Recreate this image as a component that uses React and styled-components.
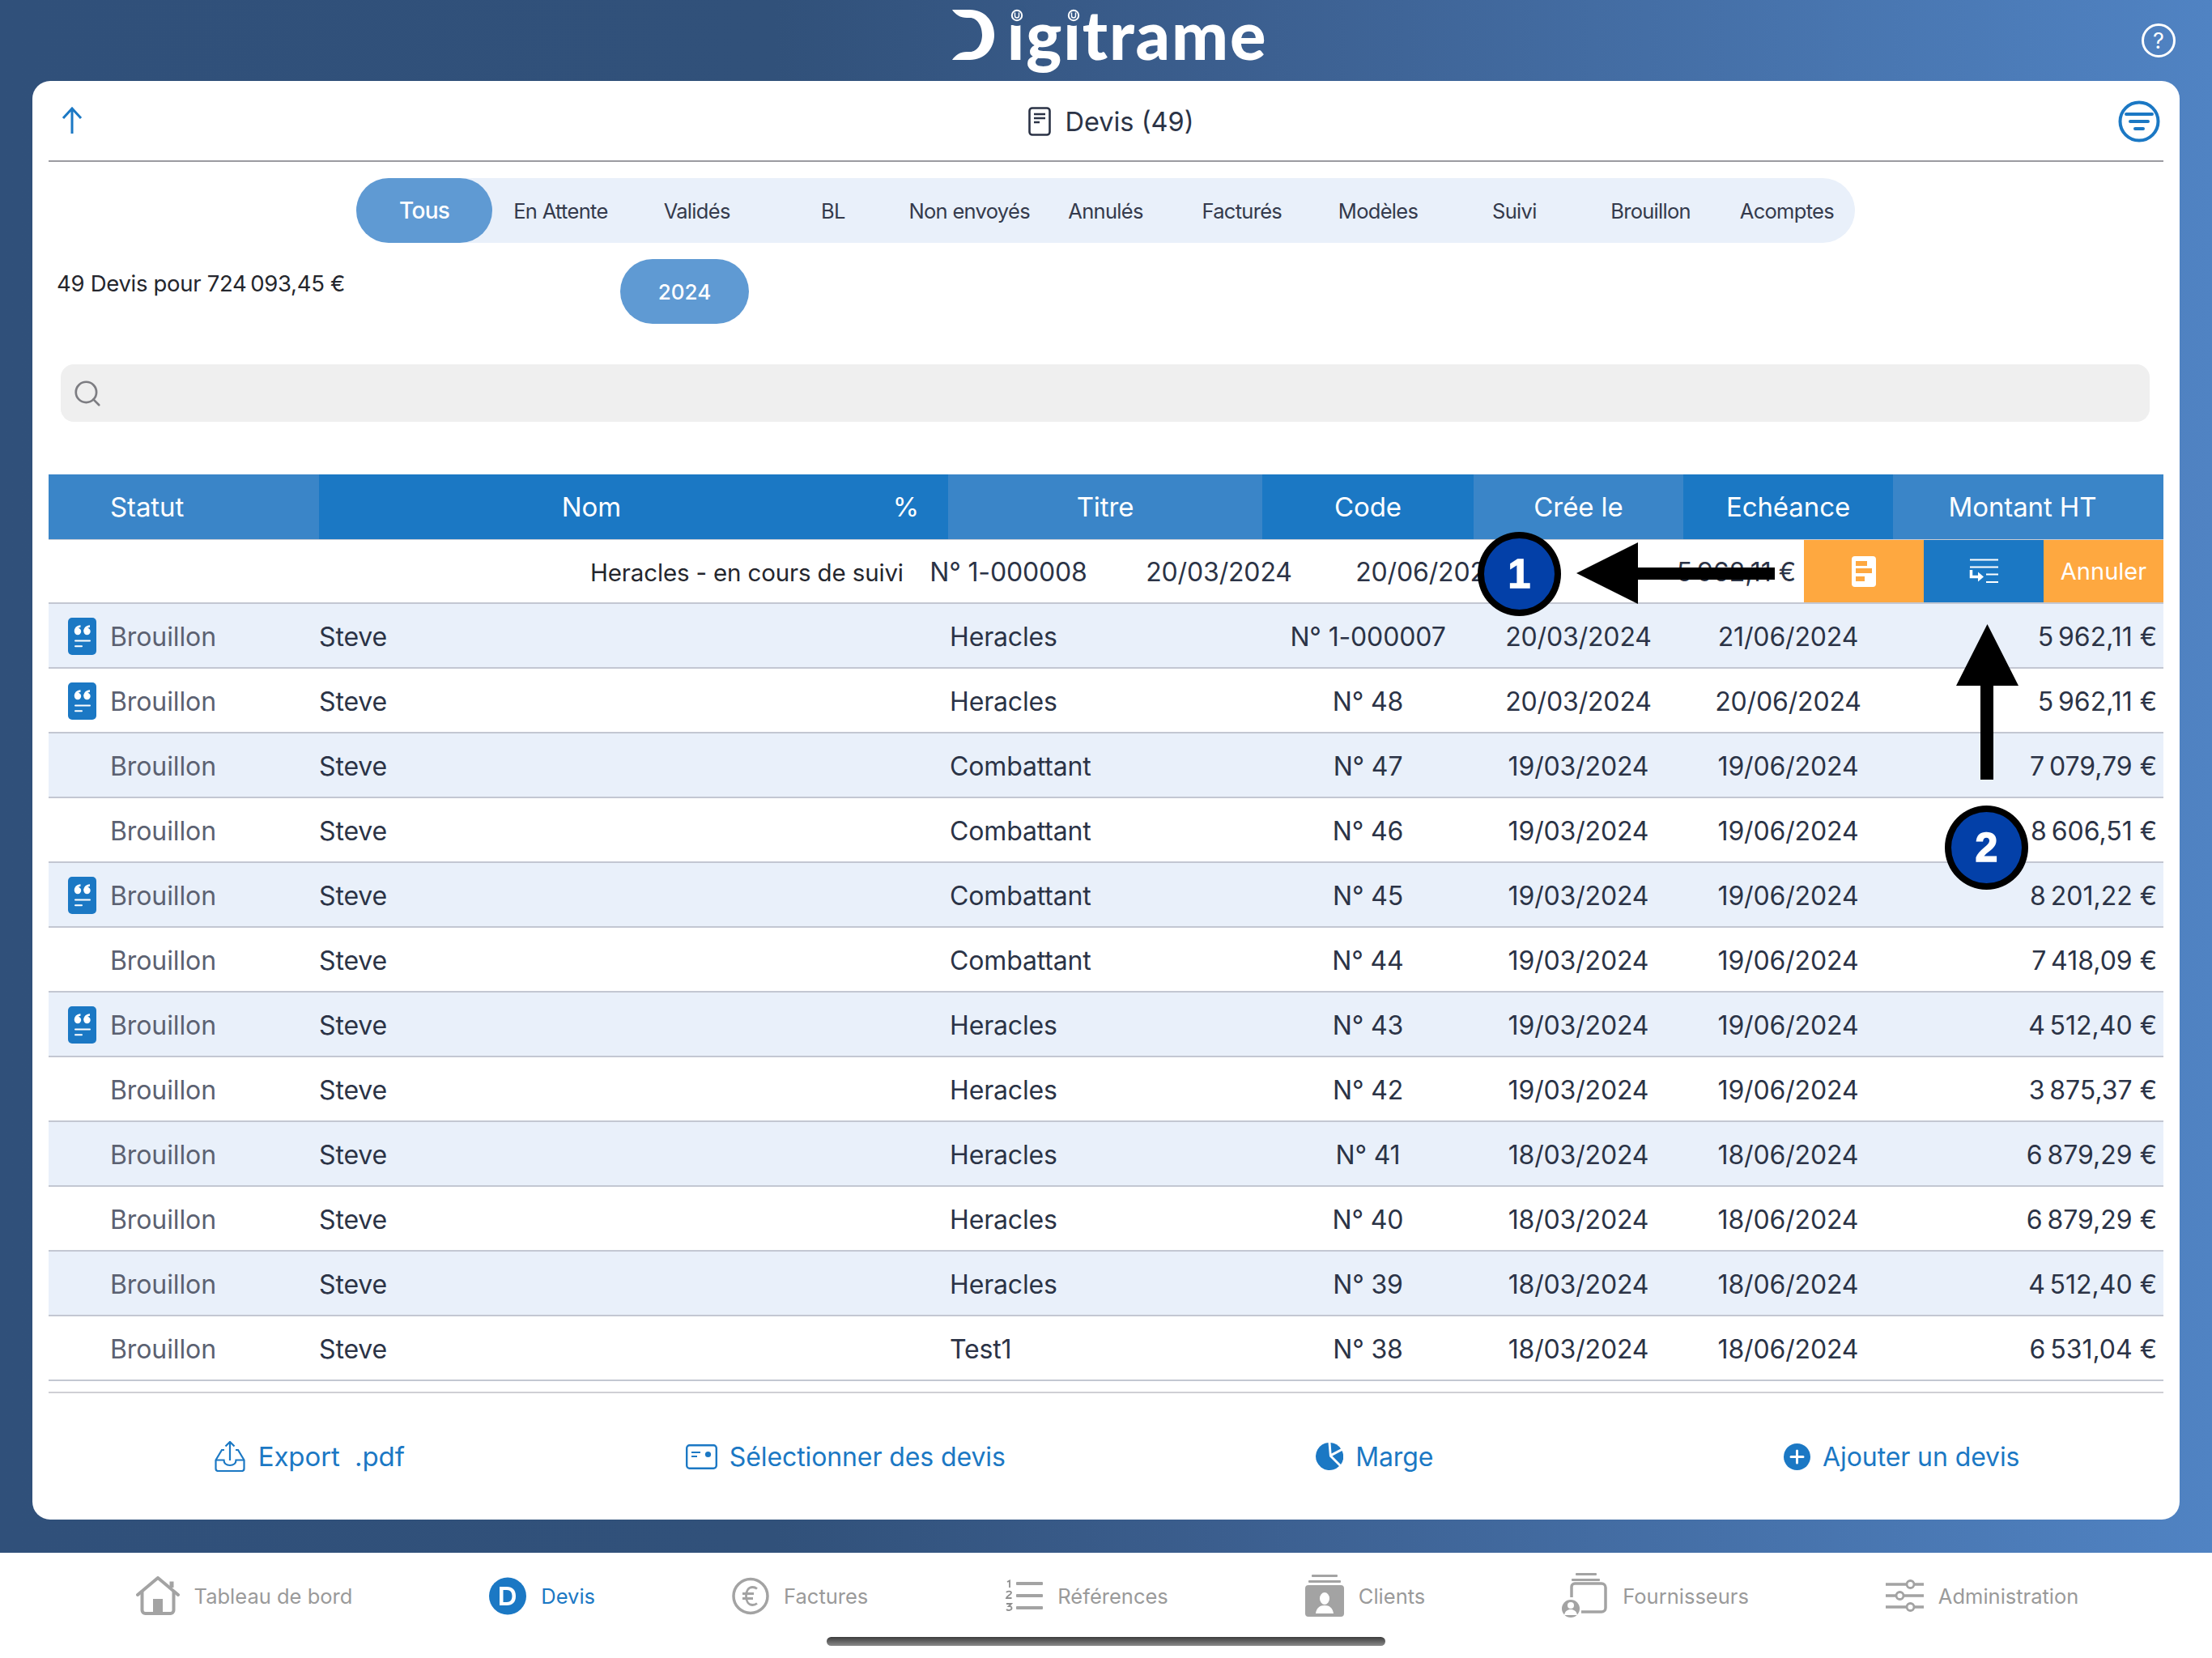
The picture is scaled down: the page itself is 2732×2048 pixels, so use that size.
import React from "react";
import styled, { createGlobalStyle } from "styled-components";
import { Search } from "lucide-react";

const BLUE = "#1b78c4";
const COLS = "334px 673px 104px 388px 261px 259px 259px 334px";
const NN = "\u202f";

const Global = createGlobalStyle`
  html, body { margin: 0; padding: 0; }
  body { font-family: "Inter", "Liberation Sans", sans-serif; color: #2b3346; }
  * { box-sizing: border-box; }
`;

const Page = styled.div`
  position: relative;
  width: 2732px;
  height: 2048px;
  overflow: hidden;
  display: flex;
  flex-direction: column;
  background: linear-gradient(to right, #30507a 0%, #31517a 35%, #3b5e8e 55%, #5083c3 100%);
`;
const TopBar = styled.header`
  height: 100px;
  flex: none;
  display: flex;
  align-items: flex-start;
  justify-content: center;
  position: relative;
`;
const Logo = styled.div`
  display: flex;
  align-items: flex-start;
  gap: 16px;
  margin-left: 9px;
`;
const LogoMark = styled.svg`
  margin-top: 12px;
`;
const LogoText = styled.span`
  position: relative;
  font-family: "Lato", sans-serif;
  font-weight: 900;
  font-size: 83px;
  line-height: 84px;
  color: #fff;
  letter-spacing: 1.9px;
`;
const LogoDot = styled.svg`
  position: absolute;
  top: 6px;
  left: ${(p) => p.$x}px;
`;
const HelpButton = styled.div`
  position: absolute;
  right: 45px;
  top: 29px;
  width: 42px;
  height: 42px;
  border-radius: 50%;
  border: 3px solid #fff;
  color: #fff;
  font-size: 27px;
  display: flex;
  align-items: center;
  justify-content: center;
`;
const Card = styled.main`
  flex: none;
  height: 1777px;
  margin: 0 40px;
  background: #fff;
  border-radius: 22px;
  display: flex;
  flex-direction: column;
`;
const TitleBar = styled.div`
  height: 100px;
  margin: 0 20px;
  padding-top: 2px;
  border-bottom: 2px solid #9b9ba1;
  display: grid;
  grid-template-columns: 120px 1fr 120px;
  align-items: center;
`;
const BackIcon = styled.svg`
  width: 30px;
  height: 34px;
  margin-left: 14px;
  margin-top: -2px;
`;
const Title = styled.div`
  display: flex;
  align-items: center;
  justify-content: center;
  gap: 17px;
  padding-left: 13px;
  font-size: 32.5px;
  color: #2b3346;
`;
const MenuIcon = styled.svg`
  width: 52px;
  height: 52px;
  justify-self: end;
  margin-right: 4px;
`;
const Segments = styled.nav`
  margin: 20px 0 0 400px;
  width: 1851px;
  height: 80px;
  flex: none;
  border-radius: 40px;
  background: #e9f0fa;
  display: grid;
  grid-template-columns: repeat(11, 1fr);
`;
const Segment = styled.div`
  display: flex;
  align-items: center;
  justify-content: center;
  border-radius: 40px;
  letter-spacing: -0.7px;
  font-weight: ${(p) => (p.$active ? 500 : 400)};
  color: ${(p) => (p.$active ? "#fff" : "#343a4c")};
  background: ${(p) => (p.$active ? "#5f9ad3" : "transparent")};
  font-size: ${(p) => (p.$active ? "28px" : "25.5px")};
`;
const SummaryRow = styled.div`
  display: flex;
  align-items: flex-start;
  height: 80px;
  margin-top: 20px;
  padding-left: 30px;
`;
const Summary = styled.div`
  width: 696px;
  padding-top: 12px;
  font-size: 27.5px;
  line-height: 36px;
  color: #24262d;
  letter-spacing: -0.3px;
`;
const YearPill = styled.div`
  width: 159px;
  height: 80px;
  border-radius: 40px;
  background: #5f9ad3;
  color: #fff;
  font-size: 26px;
  font-weight: 500;
  display: flex;
  align-items: center;
  justify-content: center;
`;
const SearchBar = styled.div`
  margin: 50px 37px 0 35px;
  height: 71px;
  flex: none;
  border-radius: 16px;
  background: #efefef;
  display: flex;
  align-items: center;
  padding-left: 14px;
  color: #7d7d82;
`;
const Table = styled.section`
  margin: 65px 20px 0;
  flex: none;
`;
const HeadRow = styled.div`
  display: grid;
  grid-template-columns: ${COLS};
  height: 81px;
  border-bottom: 1px solid #c9ccd4;
`;
const HeadCell = styled.div`
  display: flex;
  align-items: center;
  justify-content: ${(p) => (p.$start ? "flex-start" : "center")};
  padding-left: ${(p) => (p.$start ? "76px" : 0)};
  padding-right: ${(p) => p.$pr || 0}px;
  background: ${(p) => (p.$light ? "#3a85c8" : BLUE)};
  color: #fff;
  font-size: 33px;
  letter-spacing: -0.1px;
`;
const Row = styled.div`
  display: grid;
  grid-template-columns: ${COLS};
  height: 80px;
  padding-top: 2px;
  background: ${(p) => (p.$tint ? "#e9f0fa" : "#fff")};
  border-bottom: 2px solid #c3c7d2;
  align-items: center;
`;
const SwipeRow = styled.div`
  overflow: hidden;
  border-bottom: 2px solid #c3c7d2;
  height: 79px;
`;
const SwipeTrack = styled.div`
  display: flex;
  width: 3056px;
  margin-left: -444px;
  height: 100%;
`;
const SwipeCells = styled.div`
  display: grid;
  grid-template-columns: ${COLS};
  width: 2612px;
  padding-top: 2px;
  align-items: center;
  flex: none;
`;
const SwipeAction = styled.div`
  width: 148px;
  flex: none;
  display: flex;
  align-items: center;
  justify-content: center;
  background: ${(p) => (p.$orange ? "#fea840" : BLUE)};
  color: #fff;
  font-size: 29px;
`;
const StatusCell = styled.div`
  display: flex;
  align-items: center;
  padding-left: 24px;
  gap: 17px;
  color: #5b6171;
  font-size: 32px;
  letter-spacing: -0.1px;
`;
const IconSlot = styled.div`
  width: 35px;
  height: 46px;
  flex: none;
`;
const Cell = styled.div`
  font-size: ${(p) => p.$size || 32}px;
  letter-spacing: ${(p) => (p.$align === "right" ? "0.3px" : "-0.15px")};
  white-space: nowrap;
  color: ${(p) => (p.$black ? "#24262d" : "#2b3346")};
  text-align: ${(p) => p.$align || "left"};
  padding-right: ${(p) => p.$pr || 0}px;
  padding-left: ${(p) => p.$pl || 0}px;
`;
const Wide = styled(Cell)`
  grid-column: span 2;
`;
const FooterRule = styled.div`
  margin: 13px 20px 0;
  height: 2px;
  flex: none;
  background: #cfcfd4;
`;
const Actions = styled.div`
  flex: 1;
  margin: 0 20px;
  padding-left: 14px;
  display: grid;
  grid-template-columns: repeat(4, 1fr);
  align-items: center;
`;
const ActionLink = styled.div`
  display: flex;
  align-items: center;
  justify-content: center;
  gap: 15px;
  color: ${BLUE};
  font-size: ${(p) => p.$size || 32}px;
  letter-spacing: -0.1px;
  white-space: pre;
  padding-right: ${(p) => p.$pr || 0}px;
  padding-left: ${(p) => p.$pl || 0}px;
`;
const BottomBar = styled.footer`
  position: absolute;
  left: 0;
  right: 0;
  bottom: 0;
  height: 130px;
  background: #fff;
  display: flex;
  align-items: flex-start;
  justify-content: center;
  gap: 169px;
  padding: 26px 0 0 3px;
`;
const Tab = styled.div`
  display: flex;
  align-items: center;
  height: 54px;
  gap: 18px;
  color: ${(p) => (p.$active ? BLUE : "#9a9a9a")};
  font-size: 25.500px;
  white-space: nowrap;
`;
const HomeBar = styled.div`
  position: absolute;
  left: 1021px;
  bottom: 15px;
  width: 690px;
  height: 11px;
  border-radius: 6px;
  background: linear-gradient(to bottom, #3d3d3d, #8a8a8a);
`;
const Badge = styled.div`
  position: absolute;
  left: ${(p) => p.$x}px;
  top: ${(p) => p.$y}px;
  width: 103px;
  height: 104px;
  border-radius: 50%;
  background: #0340a8;
  border: 8px solid #000;
  color: #fff;
  display: flex;
  align-items: center;
  justify-content: center;
  font-family: "Liberation Sans", sans-serif;
  font-weight: 700;
  font-size: 50px;
  -webkit-text-stroke: 1.5px #fff;
`;
const Arrow = styled.svg`
  position: absolute;
  left: ${(p) => p.$x}px;
  top: ${(p) => p.$y}px;
`;

const QuoteIcon = () => (
  <svg width="35" height="46" viewBox="0 0 35 46">
    <rect width="35" height="46" rx="5" fill={BLUE} />
    <g fill="#fff">
      <circle cx="12" cy="17" r="4.200" />
      <circle cx="23.500" cy="17" r="4.200" />
      <path d="M7.800 17C7.800 12.500 10.500 9.800 15.500 9.300V11.800C13 12.300 11.500 13.500 11.500 15Z" />
      <path d="M19.300 17C19.300 12.500 22 9.800 27 9.300V11.800C24.500 12.300 23 13.500 23 15Z" />
      <rect x="8" y="27.500" width="20" height="2" rx="1" />
      <rect x="8" y="34.200" width="10" height="2" rx="1" />
    </g>
  </svg>
);

const DocIcon = () => (
  <svg width="28" height="36" viewBox="0 0 28 36" fill="none" stroke="#2b3346">
    <rect x="1.500" y="1.500" width="25" height="33" rx="3.500" strokeWidth="2.600" />
    <path d="M7 9h14M7 14h14M7 19h7" strokeWidth="2.400" />
  </svg>
);

const HomeIcon = () => (
  <svg width="54" height="48" viewBox="0 0 54 48" fill="none" stroke="#a3a3a3" strokeWidth="4" strokeLinecap="round" strokeLinejoin="round">
    <path d="M2 23L27 2L52 23" />
    <path d="M44 14V6.500" strokeWidth="5" strokeLinecap="butt" />
    <path d="M7.500 19V42a4 4 0 0 0 4 4H42.500a4 4 0 0 0 4-4V19" />
    <rect x="21" y="28" width="12" height="17" fill="#a3a3a3" stroke="none" />
  </svg>
);
const DevisIcon = () => (
  <svg width="46" height="47" viewBox="0 0 46 47">
    <circle cx="23" cy="23.500" r="23" fill={BLUE} />
    <path d="M15 12h9c7 0 11 4 11 11.500S31 35 24 35h-9ZM19.500 16v15H24c4.500 0 6.500-3 6.500-7.500S28.500 16 24 16Z" fill="#fff" fillRule="evenodd" transform="translate(-2 0)" />
  </svg>
);
const EuroIcon = () => (
  <svg width="46" height="47" viewBox="0 0 46 47" fill="none" stroke="#a3a3a3">
    <circle cx="23" cy="23.500" r="21" strokeWidth="3.500" />
    <path d="M31 14.500c-1.800-1.500-3.700-2-5.500-2-5 0-8 4.500-8 11s3 11 8 11c1.800 0 3.700-.5 5.500-2M13 20.500h14M13 26.500h13" strokeWidth="2.800" />
  </svg>
);
const ListIcon = () => (
  <svg width="47" height="40" viewBox="0 0 47 40">
    <g fill="#a3a3a3">
      <rect x="14" y="3" width="33" height="4" rx="1" />
      <rect x="14" y="18" width="33" height="4" rx="1" />
      <rect x="14" y="33" width="33" height="4" rx="1" />
    </g>
    <g fill="none" stroke="#8f8f8f" strokeWidth="1.800">
      <path d="M3 3l3-1.500V10" />
      <path d="M2 16c1-2 6-2 6 .5 0 2-5 3.500-6 6.500h6.500" />
      <path d="M2 30h6l-3 3c2.500-.2 3.500 1 3.500 2.500 0 2.500-4.500 3.500-6.500 1.500" />
    </g>
  </svg>
);
const ClientIcon = () => (
  <svg width="48" height="52" viewBox="0 0 48 52">
    <g fill="#a3a3a3">
      <rect x="8" y="0" width="32" height="3" rx="1" />
      <rect x="4" y="7" width="40" height="3" rx="1" />
      <path fillRule="evenodd" d="M4 13h40a4 4 0 0 1 4 4v31a4 4 0 0 1-4 4H4a4 4 0 0 1-4-4V17a4 4 0 0 1 4-4ZM24 22a6 7.500 0 1 0 0 15a6 7.500 0 1 0 0-15ZM24 38c-6 0-10 3-11 10h22c-1-7-5-10-11-10Z" />
    </g>
  </svg>
);
const SupplierIcon = () => (
  <svg width="57" height="56" viewBox="0 0 57 56" fill="none">
    <g fill="#a3a3a3">
      <rect x="17" y="0" width="26" height="3" rx="1" />
      <rect x="12" y="7" width="35" height="3" rx="1" />
    </g>
    <path d="M12 30V17a4 4 0 0 1 4-4h33a5 5 0 0 1 5 5v25a5 5 0 0 1-5 5H24" stroke="#a3a3a3" strokeWidth="3.500" />
    <circle cx="11" cy="44" r="11" fill="#a3a3a3" />
    <circle cx="11" cy="40" r="4" fill="#fff" />
    <path d="M3 52c1-5 4-7 8-7s7 2 8 7Z" fill="#fff" />
  </svg>
);
const SlidersIcon = () => (
  <svg width="47" height="42" viewBox="0 0 47 42" fill="none" stroke="#a3a3a3" strokeWidth="3.500">
    <path d="M0 7h26M35 7h12M0 21h13M22 21h25M0 35h26M35 35h12" />
    <circle cx="30.500" cy="7" r="4.500" strokeWidth="2.800" />
    <circle cx="17.500" cy="21" r="4.500" strokeWidth="2.800" />
    <circle cx="30.500" cy="35" r="4.500" strokeWidth="2.800" />
  </svg>
);
const ExportIcon = () => (
  <svg width="40" height="38" viewBox="0 0 38 38" fill="none" stroke={BLUE} strokeWidth="2.200">
    <path d="M19 24V1M13.500 6.500L19 1l5.500 5.500" />
    <path d="M12 11H9L1.500 23.500V34a3 3 0 0 0 3 3h29a3 3 0 0 0 3-3V23.500L29 11h-3" />
    <path d="M1.500 23.500h10c0 4 3 6.500 7.500 6.500s7.500-2.500 7.500-6.500h10" />
  </svg>
);
const SelectIcon = () => (
  <svg width="39" height="31" viewBox="0 0 39 31" fill="none" stroke={BLUE}>
    <rect x="1.200" y="1.200" width="36.600" height="28.600" rx="3.500" strokeWidth="2.400" />
    <path d="M7 10h11M7 15h7" strokeWidth="2.200" />
    <circle cx="27.500" cy="12.500" r="3.600" fill={BLUE} stroke="none" />
  </svg>
);
const PieIcon = () => (
  <svg width="34" height="34" viewBox="0 0 34 34" fill={BLUE}>
    <path d="M15.500 0A17 17 0 1 0 29 29L17 17Z" />
    <path d="M18.500 0A17 17 0 0 1 31 7.500L19.500 13.500Z" />
    <path d="M20.500 16.500L32.500 10A17 17 0 0 1 31 27Z" />
  </svg>
);
const PlusIcon = () => (
  <svg width="33" height="33" viewBox="0 0 33 33">
    <circle cx="16.500" cy="16.500" r="16.500" fill={BLUE} />
    <path d="M16.500 9v15M9 16.500h15" stroke="#fff" strokeWidth="3" strokeLinecap="round" />
  </svg>
);
const SwipeDocIcon = () => (
  <svg width="30" height="38" viewBox="0 0 30 38">
    <rect width="30" height="38" rx="4" fill="#fff" />
    <g fill="#fea840">
      <rect x="5" y="6" width="14" height="6" />
      <rect x="5" y="15" width="20" height="6" />
      <rect x="5" y="25" width="11" height="6" />
    </g>
  </svg>
);
const SwipeSortIcon = () => (
  <svg width="36" height="32" viewBox="0 0 36 32" fill="none" stroke="#fff" strokeWidth="2">
    <path d="M1 1.500h35M1 10.500h35M21 19.500h15M21 29h15" />
    <path d="M2.500 14v8.500H12" strokeWidth="3.500" />
    <path d="M11 16.500l7 6-7 6Z" fill="#fff" stroke="none" />
  </svg>
);
const DotMark = ({ x, bg }) => (
  <LogoDot $x={x} width="28" height="26" viewBox="0 0 28 26" fill="none">
    <circle cx="14" cy="13" r="13" fill={bg} />
    <circle cx="14" cy="13" r="6.200" stroke="#fff" strokeWidth="2" />
    <path d="M11.500 9.500v4a2.500 2.500 0 0 0 5 0v-4" stroke="#fff" strokeWidth="1.500" />
  </LogoDot>
);

const tabs = [
  ["Tableau de bord", HomeIcon],
  ["Devis", DevisIcon, true],
  ["Factures", EuroIcon],
  ["Références", ListIcon],
  ["Clients", ClientIcon],
  ["Fournisseurs", SupplierIcon],
  ["Administration", SlidersIcon],
];

const segments = ["Tous", "En Attente", "Validés", "BL", "Non envoyés", "Annulés", "Facturés", "Modèles", "Suivi", "Brouillon", "Acomptes"];

const rows = [
  [true, "Heracles", "N° 1-000007", "20/03/2024", "21/06/2024", `5${NN}962,11 €`],
  [true, "Heracles", "N° 48", "20/03/2024", "20/06/2024", `5${NN}962,11 €`],
  [false, "Combattant", "N° 47", "19/03/2024", "19/06/2024", `7${NN}079,79 €`],
  [false, "Combattant", "N° 46", "19/03/2024", "19/06/2024", `8${NN}606,51 €`],
  [true, "Combattant", "N° 45", "19/03/2024", "19/06/2024", `8${NN}201,22 €`],
  [false, "Combattant", "N° 44", "19/03/2024", "19/06/2024", `7${NN}418,09 €`],
  [true, "Heracles", "N° 43", "19/03/2024", "19/06/2024", `4${NN}512,40 €`],
  [false, "Heracles", "N° 42", "19/03/2024", "19/06/2024", `3${NN}875,37 €`],
  [false, "Heracles", "N° 41", "18/03/2024", "18/06/2024", `6${NN}879,29 €`],
  [false, "Heracles", "N° 40", "18/03/2024", "18/06/2024", `6${NN}879,29 €`],
  [false, "Heracles", "N° 39", "18/03/2024", "18/06/2024", `4${NN}512,40 €`],
  [false, "Test1", "N° 38", "18/03/2024", "18/06/2024", `6${NN}531,04 €`],
];

export default function App() {
  return (
    <Page>
      <Global />
      <TopBar>
        <Logo>
          <LogoMark width="52" height="62" viewBox="0 0 52 62">
            <path d="M0 0H22C40 0 52 14 52 31S40 62 22 62H0C4 56 10 52 18 52H22C31 52 37 42 37 31S31 10 22 10H18C10 10 4 6 0 0Z" fill="#fff" />
          </LogoMark>
          <LogoText>
            igitrame
            <DotMark x={-2} bg="#365885" />
            <DotMark x={68} bg="#385a88" />
          </LogoText>
        </Logo>
        <HelpButton>?</HelpButton>
      </TopBar>
      <Card>
        <TitleBar>
          <BackIcon viewBox="0 0 30 34" fill="none" stroke={BLUE} strokeWidth="3">
            <path d="M15 33V2M4 14L15 2l11 12" />
          </BackIcon>
          <Title>
            <DocIcon />
            <span>Devis (49)</span>
          </Title>
          <MenuIcon viewBox="0 0 52 52" fill="none" stroke={BLUE}>
            <circle cx="26" cy="26" r="23.500" strokeWidth="4" />
            <path d="M10 17h32M15 26h22M21 35h10" strokeWidth="4" strokeLinecap="round" />
          </MenuIcon>
        </TitleBar>
        <Segments>
          {segments.map((s, i) => (
            <Segment key={s} $active={i === 0}>{s}</Segment>
          ))}
        </Segments>
        <SummaryRow>
          <Summary>49 Devis pour 724{NN}093,45 €</Summary>
          <YearPill>2024</YearPill>
        </SummaryRow>
        <SearchBar>
          <Search size={38} strokeWidth={1.7} />
        </SearchBar>
        <Table>
          <HeadRow>
            <HeadCell $light $start>Statut</HeadCell>
            <HeadCell>Nom</HeadCell>
            <HeadCell>%</HeadCell>
            <HeadCell $light>Titre</HeadCell>
            <HeadCell>Code</HeadCell>
            <HeadCell $light>Crée le</HeadCell>
            <HeadCell>Echéance</HeadCell>
            <HeadCell $light $pr={14}>Montant HT</HeadCell>
          </HeadRow>
          <SwipeRow>
            <SwipeTrack>
              <SwipeCells>
                <Cell />
                <Cell />
                <Cell />
                <Cell $black $pl={2} $size={29.5}>Heracles - en cours de suivi</Cell>
                <Cell $align="center">N° 1-000008</Cell>
                <Cell $align="center">20/03/2024</Cell>
                <Cell $align="center">20/06/2024</Cell>
                <Cell $align="right" $pr={10}>5{NN}962,11 €</Cell>
              </SwipeCells>
              <SwipeAction $orange><SwipeDocIcon /></SwipeAction>
              <SwipeAction><SwipeSortIcon /></SwipeAction>
              <SwipeAction $orange>Annuler</SwipeAction>
            </SwipeTrack>
          </SwipeRow>
          {rows.map((r, i) => (
            <Row key={r[2]} $tint={i % 2 === 0}>
              <StatusCell>
                <IconSlot>{r[0] && <QuoteIcon />}</IconSlot>
                <span>Brouillon</span>
              </StatusCell>
              <Wide>Steve</Wide>
              <Cell $pl={2}>{r[1]}</Cell>
              <Cell $align="center">{r[2]}</Cell>
              <Cell $align="center">{r[3]}</Cell>
              <Cell $align="center">{r[4]}</Cell>
              <Cell $align="right" $pr={8}>{r[5]}</Cell>
            </Row>
          ))}
        </Table>
        <FooterRule />
        <Actions>
          <ActionLink $pr={34} $size={33}><ExportIcon />{"Export  .pdf"}</ActionLink>
          <ActionLink $pr={8}><SelectIcon />Sélectionner des devis</ActionLink>
          <ActionLink><PieIcon />Marge</ActionLink>
          <ActionLink $pl={3}><PlusIcon />Ajouter un devis</ActionLink>
        </Actions>
      </Card>
      <BottomBar>
        {tabs.map(([label, Icon, active]) => (
          <Tab key={label} $active={active}>
            <Icon />
            <span>{label}</span>
          </Tab>
        ))}
      </BottomBar>
      <HomeBar />
      <Arrow $x={1947} $y={670} width="245" height="76" viewBox="0 0 245 76">
        <path d="M0 38L76 0V31H245V46H76V76Z" fill="#000" />
      </Arrow>
      <Arrow $x={2416} $y={771} width="77" height="192" viewBox="0 0 77 192">
        <path d="M38.500 0L77 76H46V192H30V76H0Z" fill="#000" />
      </Arrow>
      <Badge $x={1825} $y={657}>1</Badge>
      <Badge $x={2402} $y={995}>2</Badge>
    </Page>
  );
}
